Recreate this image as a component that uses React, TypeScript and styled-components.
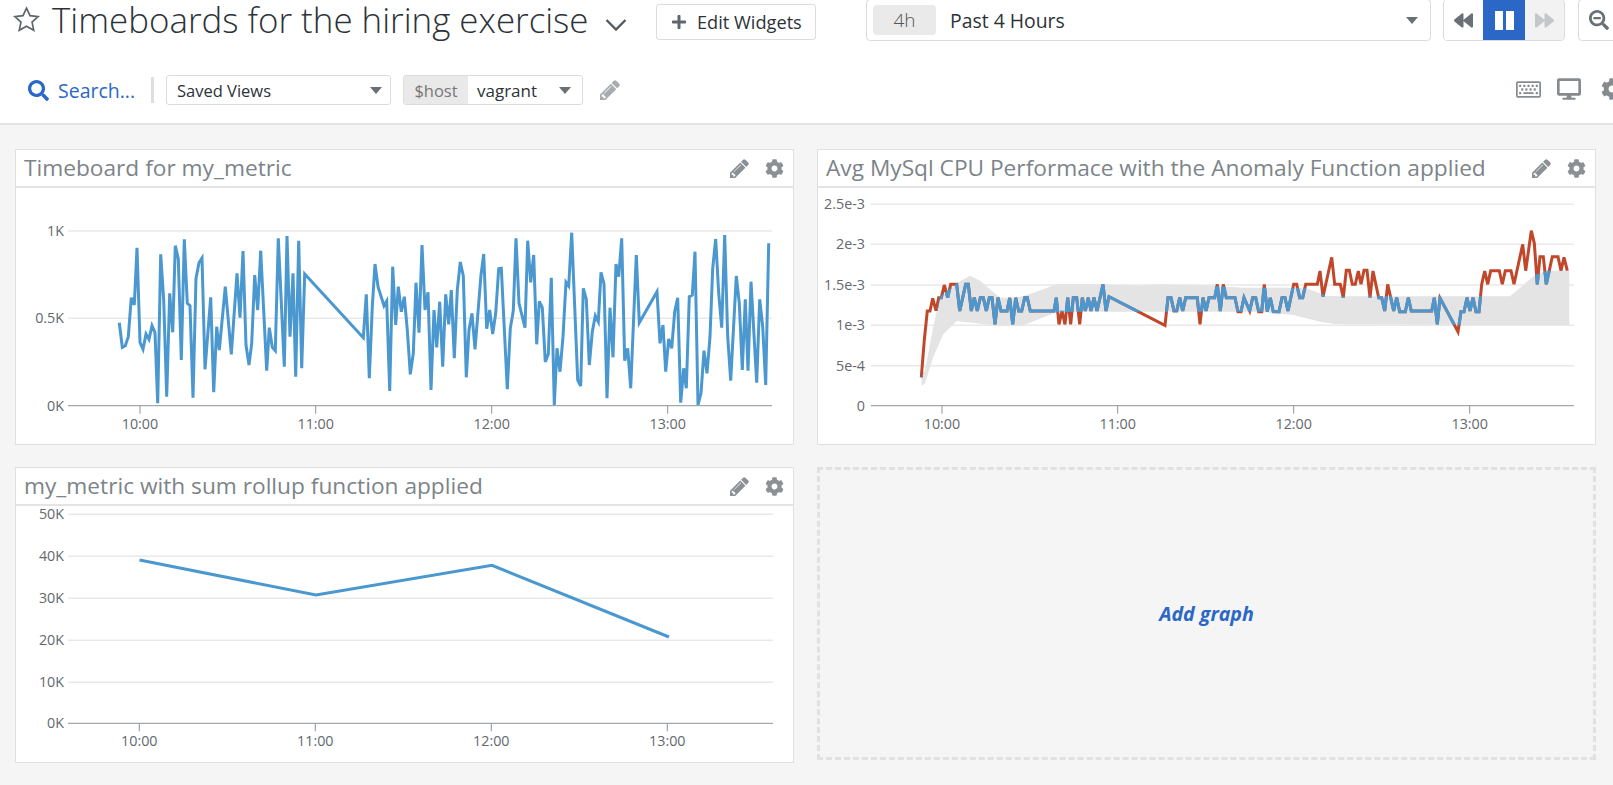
import React from "react";
import styled, { createGlobalStyle } from "styled-components";
import { FaCog, FaPlus, FaSearch, FaSearchMinus, FaBackward, FaForward, FaDesktop, FaRegKeyboard } from "react-icons/fa";

const Global = createGlobalStyle`
  html, body { margin: 0; padding: 0; background: #f5f5f5; overflow: hidden; }
  body { font-family: "Open Sans", "Liberation Sans", sans-serif; }
  * { box-sizing: border-box; }
`;

const Page = styled.div`
  width: 1613px;
  height: 785px;
  overflow: hidden;
  background: #f5f5f5;
`;
const Header = styled.header`
  height: 125px;
  background: #fff;
  border-bottom: 2px solid #e3e3e3;
  display: flex;
  flex-direction: column;
`;
const TopRow = styled.div`
  height: 40px;
  display: flex;
  align-items: flex-start;
  white-space: nowrap;
`;
const StarSlot = styled.span`
  width: 52px;
  height: 40px;
  padding: 5px 0 0 12px;
  color: #5f666b;
  flex: none;
`;
const Title = styled.h1`
  margin: 0;
  width: 540px;
  flex: none;
  font-size: 34.9px;
  line-height: 40px;
  font-weight: 300;
  color: #2c3338;
`;
const ChevronSlot = styled.span`
  width: 64px;
  height: 40px;
  padding: 15px 0 0 13px;
  color: #555c61;
  flex: none;
`;
const EditButton = styled.button`
  width: 160px;
  height: 36px;
  margin-top: 4px;
  padding: 0 0 0 14px;
  background: #fff;
  border: 1px solid #dcdcdc;
  border-radius: 3px;
  display: flex;
  align-items: center;
  gap: 10px;
  font: 400 18.2px "Open Sans", sans-serif;
  color: #2c3338;
  flex: none;
  svg { color: #60676c; }
`;
const TimePicker = styled.div`
  width: 565px;
  height: 42px;
  margin: -1px 0 0 50px;
  padding: 0 12px 0 6px;
  background: #fff;
  border: 1px solid #dcdcdc;
  border-radius: 4px;
  display: flex;
  align-items: center;
  flex: none;
`;
const TimeChip = styled.span`
  width: 63px;
  height: 30px;
  margin-right: 14px;
  background: #eaeaea;
  border-radius: 4px;
  font-size: 19px;
  font-weight: 300;
  color: #555;
  display: flex;
  align-items: center;
  justify-content: center;
`;
const TimeLabel = styled.span`
  font-size: 19.4px;
  color: #2c3338;
  flex: 1;
`;
const Caret = styled.span<{ $tone?: string }>`
  width: 0;
  height: 0;
  border-left: 6px solid transparent;
  border-right: 6px solid transparent;
  border-top: 7px solid ${(p) => p.$tone ?? "#6a7176"};
  flex: none;
`;
const Transport = styled.div`
  width: 122px;
  height: 42px;
  margin: -1px 0 0 12px;
  border: 1px solid #dcdcdc;
  border-radius: 4px;
  display: flex;
  overflow: hidden;
  flex: none;
`;
const TransportButton = styled.span<{ $active?: boolean; $muted?: boolean }>`
  flex: ${(p) => (p.$active ? "0 0 42px" : "1")};
  display: flex;
  align-items: center;
  justify-content: center;
  gap: 3px;
  background: ${(p) => (p.$active ? "#2b67c6" : p.$muted ? "#f2f2f2" : "#fff")};
  color: ${(p) => (p.$muted ? "#c3c7ca" : "#6a7176")};
`;
const PauseBar = styled.span`
  width: 8px;
  height: 19px;
  background: #fff;
`;
const ZoomButton = styled.span`
  width: 60px;
  height: 42px;
  margin: -1px 0 0 13px;
  padding-left: 10px;
  border: 1px solid #dcdcdc;
  border-radius: 4px;
  display: flex;
  align-items: center;
  color: #6a7176;
  flex: none;
`;
const BottomRow = styled.div`
  height: 30px;
  margin-top: 35px;
  padding-left: 28px;
  display: flex;
  align-items: center;
  white-space: nowrap;
`;
const SearchLink = styled.span`
  width: 126px;
  display: flex;
  align-items: center;
  gap: 9px;
  font-size: 19.5px;
  color: #2b67c6;
  flex: none;
  border-right: 3px solid #dedede;
  height: 26px;
  margin-right: 12px;
`;
const SavedViews = styled.div`
  width: 225px;
  height: 30px;
  padding: 0 8px 0 10px;
  background: #fff;
  border: 1px solid #dcdcdc;
  border-radius: 3px;
  display: flex;
  align-items: center;
  justify-content: space-between;
  font-size: 16.5px;
  color: #2c3338;
  flex: none;
`;
const VarGroup = styled.div`
  width: 180px;
  height: 30px;
  margin-left: 12px;
  border: 1px solid #dcdcdc;
  border-radius: 3px;
  display: flex;
  flex: none;
  overflow: hidden;
`;
const VarName = styled.span`
  width: 64px;
  background: #e9e9e9;
  color: #777;
  font-size: 16.5px;
  display: flex;
  align-items: center;
  justify-content: center;
`;
const VarValue = styled.span`
  flex: 1;
  padding: 0 11px 0 9px;
  display: flex;
  align-items: center;
  justify-content: space-between;
  font-size: 17px;
  color: #2c3338;
`;
const HeaderPencil = styled.span`
  margin-left: 17px;
  color: #a8acaf;
  display: flex;
`;
const RightTools = styled.div`
  margin-left: auto;
  display: flex;
  align-items: center;
  gap: 16px;
  color: #858b8f;
  flex: none;
  transform: translate(10px, -1px);
  svg:last-child { margin-left: 4px; }
`;
const Board = styled.main`
  padding: 24px 17px 0 15px;
  display: grid;
  grid-template-columns: 779px 779px;
  grid-template-rows: 296px 296px;
  column-gap: 23px;
  row-gap: 22px;
`;
const Card = styled.section`
  background: #fff;
  border: 1px solid #e0e0e0;
  display: flex;
  flex-direction: column;
  min-width: 0;
`;
const CardHeader = styled.div`
  height: 38px;
  flex: none;
  padding: 0 9px 0 8px;
  border-bottom: 2px solid #e4e4e4;
  display: flex;
  align-items: center;
  gap: 16px;
  color: #8a9094;
`;
const CardTitle = styled.h2`
  margin: 0;
  flex: 1;
  font-size: 22.7px;
  font-weight: 400;
  line-height: 38px;
  color: #7c8489;
  white-space: nowrap;
`;
const Plot = styled.svg`
  display: block;
  width: 776px;
  height: 255px;
  flex: none;
  overflow: visible;
`;
const AddGraph = styled.div`
  height: 293px;
  border: 3px dashed #e1e1e4;
  display: flex;
  align-items: center;
  justify-content: center;
  font-size: 19.6px;
  font-weight: 700;
  font-style: italic;
  color: #2b67c6;
`;
const TickText = styled.text`
  font-family: "Open Sans", sans-serif;
  font-size: 14.3px;
  fill: #63696e;
`;

const PENCIL =
  "M491 1536l91-91-235-235-91 91v107h128v128h107zm523-928q0-22-22-22-10 0-17 7l-542 542q-7 7-7 17 0 22 22 22 10 0 17-7l542-542q7-7 7-17zm-54-192l416 416-832 832h-416v-416zm683 96q0 53-37 90l-166 166-416-416 166-165q36-38 90-38 53 0 91 38l235 234q37 39 37 91z";

const Pencil = ({ size = 20 }: { size?: number }) => (
  <svg width={size} height={size} viewBox="128 128 1536 1536" fill="currentColor">
    <path d={PENCIL} />
  </svg>
);

// Reference points are read from 3x crops: x = ox + zx / 3, y = 140 + zy / 3.
const pts = (s: string, ox: number): [number, number][] =>
  s
    .trim()
    .split(/\s+/)
    .map((p) => {
      const [x, y] = p.split(",").map(Number);
      return [ox + x / 3, 140 + y / 3] as [number, number];
    });
const toStr = (a: [number, number][]) => a.map(([x, y]) => `${x.toFixed(1)},${y.toFixed(1)}`).join(" ");

const metric = toStr([
  ...pts(
    "358,548 367,622 376,617 385,590 394,473 403,495 411,323 420,607 429,628 438,582 447,598 456,557 465,578 473,790 482,343 491,480 500,770 509,460 518,577 526,317 535,357 544,660 553,298 562,490 570,497 579,773 588,415 597,368 606,354 615,688 632,472 641,757 650,560 658,630 676,440 694,643 711,400 720,533 729,333 738,615 747,675 755,610 764,405 773,510 782,332 800,692 808,563 817,622 826,632 835,295 853,680 861,288 870,590 879,400 887,710 896,302 905,685 914,402 1090,593 1099,463 1108,715 1117,500 1125,372 1134,440 1152,497 1160,483 1169,753 1178,380 1187,555 1195,440",
    0
  ),
  ...pts(
    "4,515 13,470 22,570 31,703 40,640 48,428 57,578 66,315 75,510 84,457 93,750 102,510 110,622 119,485 128,680 137,463 146,553 154,450 163,655 172,450 181,366 190,408 199,712 207,570 216,520 225,628 243,405 251,342 260,566 269,510 278,582 287,520 296,386 304,385 322,748 331,565 340,512 348,295 357,490 375,563 383,302 392,427 401,345 410,613 418,484 427,503 436,666 445,642 454,413 463,795 471,625 480,695 489,590 498,427 506,438 515,278 524,500 533,720 542,738 550,445 559,478 568,675 577,575 586,527 595,545 603,397 612,432 621,775 630,503 639,652 648,372 656,410 665,295 674,662 683,625 692,745 709,345 718,548 771,455 780,610 789,555 797,695 806,597 815,625 824,515 833,473 842,788 851,685 859,745 868,470 877,465 885,335 894,795 903,760 912,632 921,700 930,590 938,385 947,297 956,460 965,563 974,285 983,590 992,722 1009,408 1018,490 1027,690 1036,478 1044,692 1053,425 1070,728 1079,478 1088,560 1097,735 1106,310",
    400
  ),
]);

const mysql = toStr([
  ...pts(
    "334,712 343,600 352,513 360,513 368,475 378,512 386,473 394,473 403,435 413,473 422,433 431,433 440,433 449,513 458,473 467,433 475,433 484,513 493,473 502,513 511,473 520,473 529,513 538,473 546,473 555,553 564,473 573,513 591,513 599,473 608,553 617,473 626,513 635,513 644,473 652,473 661,513 732,513 739,473 747,553 756,513 765,553 773,473 782,553 790,473 800,473 809,553 817,473 826,513 835,473 843,513 852,473 861,513 870,473 879,433 888,513 897,470 1065,556 1074,473 1083,473 1092,513 1100,513 1109,473 1118,513 1127,473 1162,473 1170,553 1179,473 1188,513 1197,473",
    810
  ),
  ...pts(
    "14,473 22,433 31,513 40,433 49,473 75,473 84,515 93,515 102,473 119,513 128,473 137,473 146,515 155,515 163,433 172,515 181,473 190,515 207,515 216,473 225,473 234,513 251,433 260,433 269,473 278,473 287,433 322,433 330,393 339,470 365,352 374,433 391,433 400,473 409,391 418,391 427,433 436,433 445,393 453,433 462,391 471,391 480,473 489,393 506,473 515,473 524,513 533,433 542,473 551,513 560,473 569,515 586,515 595,473 604,513 665,513 673,473 682,553 690,474 744,575 753,515 762,515 771,473 780,513 789,473 798,515 807,515 815,433 824,393 833,433 842,392 868,392 877,433 886,392 903,392 912,433 938,313 947,392 964,272 973,310 982,433 990,350 1000,350 1009,433 1027,350 1044,350 1053,392 1062,352 1072,392",
    1210
  ),
]);

const band = toStr([
  ...pts(
    "335,738 334,712 345,690 370,560 390,470 440,430 480,407 510,422 570,473 620,473 660,462 740,433 880,433 990,437 1050,433",
    810
  ),
  ...pts(
    "0,437 100,443 220,443 290,445 350,468 400,469 900,469 975,405 1010,392 1078,392 1078,555 800,555 380,553 330,545 250,525 150,515",
    1210
  ),
  ...pts("1100,515 900,515 800,515 740,517 640,556 550,556 440,543 400,583 370,650 345,730", 810),
]);

type ChartProps = {
  x0: number;
  y0: number;
  axisFrom: number;
  axisTo: number;
  labelX: number;
  rows: [string, number][];
  ticks: [string, number][];
  children: React.ReactNode;
};

const Chart = ({ x0, y0, axisFrom, axisTo, labelX, rows, ticks, children }: ChartProps) => {
  const baseline = rows[rows.length - 1][1];
  return (
    <Plot viewBox={`${x0} ${y0} 776 255`}>
      {rows.slice(0, -1).map(([, y]) => (
        <line key={y} x1={axisFrom} x2={axisTo} y1={y} y2={y} stroke="#e9e9e9" strokeWidth={1.4} />
      ))}
      {rows.map(([label, y]) => (
        <TickText key={label} x={labelX} y={y + 5} textAnchor="end">
          {label}
        </TickText>
      ))}
      {children}
      <line x1={axisFrom} x2={axisTo} y1={baseline} y2={baseline} stroke="#a5a8aa" strokeWidth={1.2} />
      {ticks.map(([label, x]) => (
        <g key={label}>
          <line x1={x} x2={x} y1={baseline} y2={baseline + 8} stroke="#8f9396" strokeWidth={1} />
          <TickText x={x} y={baseline + 23} textAnchor="middle">
            {label}
          </TickText>
        </g>
      ))}
    </Plot>
  );
};

const CardTools = () => (
  <>
    <Pencil size={19} />
    <FaCog size={19} />
  </>
);

const BLUE = "#4a98cf";
const RED = "#c1472b";
const LINE = 3;

export default function App() {
  return (
    <Page>
      <Global />
      <Header>
        <TopRow>
          <StarSlot>
            <svg width="29" height="29" viewBox="0 0 24 24" fill="none" stroke="currentColor" strokeWidth="1.4" strokeLinejoin="miter">
              <path d="M12 2.6l2.9 6.2 6.7.8-5 4.6 1.4 6.7-6-3.4-6 3.4 1.4-6.7-5-4.6 6.7-.8z" />
            </svg>
          </StarSlot>
          <Title>Timeboards for the hiring exercise</Title>
          <ChevronSlot>
            <svg width="22" height="14" viewBox="0 0 22 14" fill="none" stroke="currentColor" strokeWidth="2.4">
              <path d="M1.5 2l9.5 9.5L20.500 2" />
            </svg>
          </ChevronSlot>
          <EditButton>
            <FaPlus size={16} />
            Edit Widgets
          </EditButton>
          <TimePicker>
            <TimeChip>4h</TimeChip>
            <TimeLabel>Past 4 Hours</TimeLabel>
            <Caret />
          </TimePicker>
          <Transport>
            <TransportButton>
              <FaBackward size={19} />
            </TransportButton>
            <TransportButton $active>
              <PauseBar />
              <PauseBar />
            </TransportButton>
            <TransportButton $muted>
              <FaForward size={19} />
            </TransportButton>
          </Transport>
          <ZoomButton>
            <FaSearchMinus size={20} />
          </ZoomButton>
        </TopRow>
        <BottomRow>
          <SearchLink>
            <FaSearch size={21} />
            Search...
          </SearchLink>
          <SavedViews>
            Saved Views
            <Caret />
          </SavedViews>
          <VarGroup>
            <VarName>$host</VarName>
            <VarValue>
              vagrant
              <Caret />
            </VarValue>
          </VarGroup>
          <HeaderPencil>
            <Pencil size={20} />
          </HeaderPencil>
          <RightTools>
            <FaRegKeyboard size={25} />
            <FaDesktop size={24} />
            <FaCog size={22} />
          </RightTools>
        </BottomRow>
      </Header>
      <Board>
        <Card>
          <CardHeader>
            <CardTitle>Timeboard for my_metric</CardTitle>
            <CardTools />
          </CardHeader>
          <Chart
            x0={16}
            y0={188}
            axisFrom={68}
            axisTo={772}
            labelX={64}
            rows={[
              ["1K", 231],
              ["0.5K", 318.3],
              ["0K", 405.7],
            ]}
            ticks={[
              ["10:00", 140],
              ["11:00", 315.7],
              ["12:00", 491.7],
              ["13:00", 667.7],
            ]}
          >
            <polyline points={metric} fill="none" stroke={BLUE} strokeWidth={LINE} />
          </Chart>
        </Card>
        <Card>
          <CardHeader>
            <CardTitle>Avg MySql CPU Performace with the Anomaly Function applied</CardTitle>
            <CardTools />
          </CardHeader>
          <Chart
            x0={818}
            y0={188}
            axisFrom={870.7}
            axisTo={1574}
            labelX={865}
            rows={[
              ["2.5e-3", 204.3],
              ["2e-3", 244.3],
              ["1.5e-3", 285],
              ["1e-3", 325.3],
              ["5e-4", 365.7],
              ["0", 405.7],
            ]}
            ticks={[
              ["10:00", 942],
              ["11:00", 1117.7],
              ["12:00", 1293.7],
              ["13:00", 1469.7],
            ]}
          >
            <defs>
              <clipPath id="band-clip">
                <polygon points={band} />
              </clipPath>
            </defs>
            <polygon points={band} fill="#e4e4e4" />
            <polyline points={mysql} fill="none" stroke={RED} strokeWidth={LINE} />
            <polyline points={mysql} fill="none" stroke={BLUE} strokeWidth={LINE} clipPath="url(#band-clip)" />
          </Chart>
        </Card>
        <Card>
          <CardHeader>
            <CardTitle>my_metric with sum rollup function applied</CardTitle>
            <CardTools />
          </CardHeader>
          <Chart
            x0={16}
            y0={506}
            axisFrom={68}
            axisTo={773}
            labelX={64}
            rows={[
              ["50K", 514.3],
              ["40K", 556.3],
              ["30K", 598.3],
              ["20K", 640.3],
              ["10K", 682.3],
              ["0K", 723.3],
            ]}
            ticks={[
              ["10:00", 139.3],
              ["11:00", 315.3],
              ["12:00", 491.3],
              ["13:00", 667.3],
            ]}
          >
            <polyline points="139.5,560 316,595 492,565.3 669,637" fill="none" stroke={BLUE} strokeWidth={LINE} />
          </Chart>
        </Card>
        <AddGraph>Add graph</AddGraph>
      </Board>
    </Page>
  );
}
